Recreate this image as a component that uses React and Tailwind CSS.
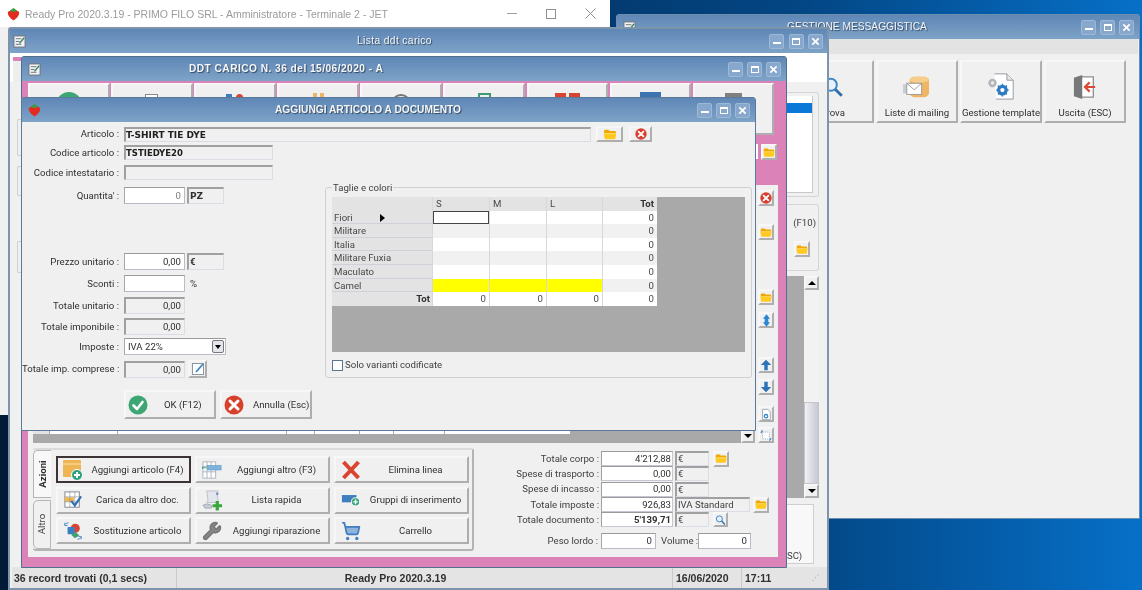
import { ShoppingCart, Wrench } from "lucide-react";

const bevel = "border-2 border-t-[#f7f7f7] border-l-[#f7f7f7] border-b-[#aeaeae] border-r-[#aeaeae] bg-[#f0f0f0]";
const inset = "border border-t-2 border-l-2 border-t-[#a0a0a0] border-l-[#a0a0a0] border-b-[#dcdce4] border-r-[#dcdce4] bg-[#f0f0f0]";
const input = "border border-[#b8bcc8] border-t-[#9a9a9a] border-l-[#a8a8a8] bg-white";

function Folder({ className = "w-[14px] h-[11px]" }) {
  return (
    <svg viewBox="0 0 16 13" className={className}>
      <path d="M1 2.5 Q1 1 2.5 1 H6 L7.5 2.5 H13.5 Q15 2.5 15 4 V6 H1 Z" fill="#f0a800" />
      <path d="M0.5 5 H15.5 L14.5 11 Q14.3 12 13.3 12 H2.7 Q1.7 12 1.5 11 Z" fill="#ffc91f" />
      <path d="M1 5.5 H15" stroke="#ffe27a" strokeWidth="1" />
    </svg>
  );
}

function RedX({ className = "w-[14px] h-[14px]" }) {
  return (
    <svg viewBox="0 0 20 20" className={className}>
      <circle cx="10" cy="10" r="9.5" fill="#d8402e" />
      <path d="M6 6 L14 14 M14 6 L6 14" stroke="#fff" strokeWidth="3" strokeLinecap="round" />
    </svg>
  );
}

function GreenCheck() {
  return (
    <svg viewBox="0 0 20 20" className="w-[20px] h-[20px]">
      <circle cx="10" cy="10" r="9.5" fill="#3da672" />
      <path d="M5.5 10.5 L9 14 L14.5 7" stroke="#fff" strokeWidth="2.6" fill="none" strokeLinecap="round" strokeLinejoin="round" />
    </svg>
  );
}

function AddBox() {
  return (
    <svg viewBox="0 0 22 22" className="w-[22px] h-[22px]">
      <rect x="1" y="1" width="18" height="17" rx="1" fill="#eeb554" />
      <path d="M1 5 H19" stroke="#f8d48c" strokeWidth="1.5" />
      <circle cx="15" cy="16" r="5.5" fill="#2f9f80" stroke="#fff" />
      <path d="M12 16 H18 M15 13 V19" stroke="#fff" strokeWidth="1.8" />
    </svg>
  );
}

function TableAdd() {
  return (
    <svg viewBox="0 0 22 22" className="w-[20px] h-[20px]">
      <path d="M1 2 H15 V20 H1 Z M1 7 H15 M1 13 H15 M5.5 2 V20 M10 2 V20" fill="#fff" stroke="#a9b2bb" />
      <rect x="6" y="6" width="15" height="5" fill="#7cb4de" stroke="#5c94c0" strokeWidth="0.6" />
      <path d="M0 8.5 H5 M1 7 L0 8.5 L1 10" stroke="#3f9a6a" fill="none" />
    </svg>
  );
}

function BigX() {
  return (
    <svg viewBox="0 0 20 20" className="w-[20px] h-[20px]">
      <path d="M2.5 2 L17.5 18 M17.5 2 L2.5 18" stroke="#d9432f" strokeWidth="4" />
    </svg>
  );
}

function CheckTable() {
  return (
    <svg viewBox="0 0 20 20" className="w-[18px] h-[18px]">
      <rect x="1" y="1" width="16" height="17" fill="#fff" stroke="#77808a" />
      <rect x="1" y="7" width="10" height="5" fill="#f2b64a" />
      <path d="M1 6.5 H17 M1 12 H17 M6.5 1 V18 M12 1 V18" stroke="#8b949e" strokeWidth="0.7" />
      <path d="M8 11 L12 16 L19 6" stroke="#2f6fb6" strokeWidth="2.4" fill="none" />
    </svg>
  );
}

function ListAdd() {
  return (
    <svg viewBox="0 0 22 22" className="w-[21px] h-[21px]">
      <path d="M5 1 H17 Q15 3 16 5 L17 13 H5 Q7 12 6 9 Z" fill="#e3e6ee" stroke="#a0a6b4" strokeWidth="0.6" />
      <path d="M1 16 Q5 13 10 16 V19 H3 Z" fill="#c8ccd8" stroke="#8b90a0" strokeWidth="0.6" />
      <circle cx="16" cy="4" r="1.4" fill="#7a8fb5" />
      <path d="M11 16.5 H21 M16 11.5 V21.5" stroke="#38a83a" strokeWidth="3.4" />
    </svg>
  );
}

function GroupAdd() {
  return (
    <svg viewBox="0 0 22 14" className="w-[20px] h-[13px]">
      <rect x="1" y="1" width="16" height="8" fill="#3d7fbe" />
      <circle cx="16" cy="8.5" r="4.5" fill="#3aa47c" stroke="#fff" />
      <path d="M13.5 8.5 H18.5 M16 6 V11" stroke="#fff" strokeWidth="1.4" />
    </svg>
  );
}

function SwapIcon() {
  return (
    <svg viewBox="0 0 22 22" className="w-[20px] h-[20px]">
      <circle cx="13.5" cy="8" r="5" fill="#d9432f" />
      <rect x="5" y="6.5" width="8" height="8" rx="1" fill="#3c7fc0" />
      <path d="M9 15 L14 12 L18 16 L13 19 Z" fill="#3fa072" />
      <path d="M2 4 Q3 2 6 2 M2 2 V5 H5 M20 18 Q19 20 16 20 M20 20 V17 H17" stroke="#3c7fc0" fill="none" />
    </svg>
  );
}

function MailDb() {
  return (
    <svg viewBox="0 0 30 28" className="w-[28px] h-[26px]">
      <rect x="7" y="3" width="21" height="22" rx="5" fill="#edb565" />
      <ellipse cx="17.5" cy="6" rx="10.5" ry="3.4" fill="#f6cd8a" />
      <rect x="0" y="11" width="5" height="10" fill="#c9ccd0" />
      <rect x="4" y="10" width="16" height="12" fill="#fff" stroke="#9a9a9a" />
      <path d="M4 10 L12 17 L20 10" stroke="#9a9a9a" fill="none" />
    </svg>
  );
}

function DocGear() {
  return (
    <svg viewBox="0 0 30 30" className="w-[27px] h-[27px]">
      <path d="M7 1 H21 L28 8 V29 H9" fill="#fff" stroke="#8e939a" />
      <path d="M21 1 V8 H28" fill="#e4e6ea" stroke="#8e939a" />
      <circle cx="5" cy="11" r="3.2" fill="none" stroke="#b3b6ba" strokeWidth="3" />
      <circle cx="16" cy="19" r="4.2" fill="none" stroke="#2f7ac0" strokeWidth="3.6" />
      <path d="M16 12 V26 M9 19 H23 M11 14 L21 24 M21 14 L11 24" stroke="#2f7ac0" strokeWidth="1.6" strokeDasharray="2 10" />
    </svg>
  );
}

function ExitDoor() {
  return (
    <svg viewBox="0 0 26 28" className="w-[24px] h-[26px]">
      <path d="M9 3 H22 V25 H9" fill="#fff" stroke="#8f8f8f" strokeWidth="1.4" />
      <path d="M1 4 L10 1 V27 L1 24 Z" fill="#77787a" />
      <path d="M24 14 H13 M18 9 L13 14 L18 19" stroke="#dc4a35" strokeWidth="2.4" fill="none" />
    </svg>
  );
}

function Lens({ className = "w-[20px] h-[20px]" }) {
  return (
    <svg viewBox="0 0 20 20" className={className}>
      <circle cx="8" cy="8" r="5.5" fill="#e8f2fa" stroke="#3d87c4" strokeWidth="1.8" />
      <path d="M12 12 L18 18" stroke="#2f6fa8" strokeWidth="2.6" />
    </svg>
  );
}

function ArrowIcon({ down }) {
  return (
    <svg viewBox="0 0 14 14" className="w-[14px] h-[14px]">
      <path d={down ? "M5 1 H9 V7 H13 L7 13 L1 7 H5 Z" : "M5 13 H9 V7 H13 L7 1 L1 7 H5 Z"} fill="#2c72b8" />
    </svg>
  );
}

function WinBtn({ kind }) {
  return (
    <div className="w-[15px] h-[15px] rounded-[2px] bg-[#87a8cc] border border-[#9cb9d8] flex items-center justify-center">
      {kind === "min" && <div className="w-[8px] h-[2px] mt-[4px] bg-white" />}
      {kind === "max" && <div className="w-[8px] h-[7px] border border-t-2 border-white" />}
      {kind === "close" && (
        <svg viewBox="0 0 10 10" className="w-[9px] h-[9px]">
          <path d="M1.5 1.5 L8.5 8.5 M8.5 1.5 L1.5 8.5" stroke="#fff" strokeWidth="2" />
        </svg>
      )}
    </div>
  );
}

function TitleBar({ title, titleClass, icon, padClass = "pl-[5px] pr-[5px]", gapClass = "gap-[4px]" }) {
  return (
    <div className={`relative h-[24px] shrink-0 bg-gradient-to-b from-[#5f87b6] to-[#7ea3c8] flex items-center ${padClass}`}>
      <div className="w-[15px] h-[15px] flex items-center justify-center">{icon}</div>
      <div
        className={`flex-1 min-w-0 whitespace-nowrap text-[10.2px] [font-family:'Liberation_Sans',sans-serif] font-bold text-[#f4f6f8] [text-shadow:1px_1px_1px_#33475e] ${titleClass}`}
      >
        {title}
      </div>
      <div className={`flex ${gapClass}`}>
        <WinBtn kind="min" />
        <WinBtn kind="max" />
        <WinBtn kind="close" />
      </div>
    </div>
  );
}

function NoteIcon() {
  return (
    <svg viewBox="0 0 14 14" className="w-[14px] h-[14px]">
      <rect x="1.5" y="1.5" width="11" height="11" fill="#fff" stroke="#8c98a6" />
      <path d="M6 1.5 H12.5" stroke="#8c98a6" />
      <path d="M5 10 L12 2" stroke="#3d87c4" strokeWidth="1.8" />
    </svg>
  );
}

function Strawberry({ className = "w-[13px] h-[14px]" }) {
  return (
    <svg viewBox="0 0 14 15" className={className}>
      <path d="M1 5 Q7 1.5 13 5 Q14 10 7 14.5 Q0 10 1 5 Z" fill="#e22c22" />
      <path d="M3 4 L7 1 L11 4 L7 5.5 Z" fill="#3c9b3c" />
    </svg>
  );
}

function SmallWinIcon() {
  return (
    <svg viewBox="0 0 14 14" className="w-[13px] h-[13px]">
      <rect x="1" y="1" width="12" height="12" fill="#eef1f5" stroke="#6b6f75" />
      <path d="M3 4 H9 M3 7 H7 M3 10 H9" stroke="#6b6f75" />
      <path d="M7 9 L12 3" stroke="#3e8a5c" strokeWidth="1.6" />
    </svg>
  );
}

function Label({ children, className = "" }) {
  return <div className={`w-[98px] text-right pr-[1px] text-[#303030] whitespace-nowrap ${className}`}>{children}</div>;
}

function FormRow({ label, className = "", children }) {
  return (
    <div className={`flex items-center gap-[4px] ${className}`}>
      <Label>{label}</Label>
      {children}
    </div>
  );
}

function Box({ className, children }) {
  return <div className={`flex items-center overflow-hidden whitespace-nowrap ${className}`}>{children}</div>;
}

const gridRows = [
  { name: "Fiori", arrow: true },
  { name: "Militare", alt: true },
  { name: "Italia" },
  { name: "Militare Fuxia", alt: true },
  { name: "Maculato" },
  { name: "Camel", alt: true, yellow: true },
];

function TaglieGrid() {
  return (
    <div className="mx-[6px] mt-[9px] h-[155px] bg-[#a9a9a9]">
      <div className="grid grid-cols-[100px_56px_56px_55px_54px] w-[325px] auto-rows-[13.6px] gap-x-[1px] leading-[13px] text-[#484848] bg-[#d6d8e0]">
        <div className="bg-[#e3e3e3]" />
        <div className="bg-[#e3e3e3] pl-[3px]">S</div>
        <div className="bg-[#e3e3e3] pl-[3px]">M</div>
        <div className="bg-[#e3e3e3] pl-[3px]">L</div>
        <div className="bg-[#e3e3e3] text-right pr-[3px] font-bold text-[#303030]">Tot</div>
        {gridRows.map((r) => (
          <div key={r.name} className="contents">
            <div className="relative bg-[#e3e3e3] pl-[2px] border-b border-[#cfd0d8]">
              {r.name}
              {r.arrow && <div className="absolute left-[48px] top-[3px] border-l-[5px] border-l-black border-y-[4px] border-y-transparent" />}
            </div>
            {[0, 1, 2].map((i) => (
              <div
                key={i}
                className={
                  r.yellow
                    ? "bg-[#ffff00]"
                    : r.arrow && i === 0
                      ? "bg-white border border-[#444]"
                      : r.alt
                        ? "bg-[#f1f1f1]"
                        : "bg-white"
                }
              />
            ))}
            <div className={`text-right pr-[3px] ${r.alt ? "bg-[#f1f1f1]" : "bg-white"}`}>0</div>
          </div>
        ))}
        <div className="bg-[#e3e3e3] text-right pr-[2px] font-bold text-[#303030]">Tot</div>
        <div className="bg-white text-right pr-[3px]">0</div>
        <div className="bg-white text-right pr-[3px]">0</div>
        <div className="bg-white text-right pr-[3px]">0</div>
        <div className="bg-white text-right pr-[3px]">0</div>
      </div>
    </div>
  );
}

function Dialog() {
  return (
    <div className="absolute left-[21px] top-[97px] w-[735px] h-[334px] flex flex-col border border-[#5b7a99] bg-[#f0f0f0] rounded-t-[3px]">
      <TitleBar title="AGGIUNGI ARTICOLO A DOCUMENTO" titleClass="pl-[233px]" icon={<Strawberry />} />
      <div className="pt-[4px] flex flex-col">
        <FormRow label="Articolo :">
          <Box className={`w-[467px] h-[15px] ${inset}`}>
            <span className="[font-family:'DejaVu_Sans',sans-serif] font-bold text-[9px] text-[#202020]">T-SHIRT TIE DYE</span>
          </Box>
          <div className="flex ml-[1px] gap-[6px]">
            <div className={`w-[27px] h-[16px] flex items-center justify-center ${bevel}`}><Folder /></div>
            <div className={`w-[23px] h-[16px] flex items-center justify-center ${bevel}`}><RedX className="w-[12px] h-[12px]" /></div>
          </div>
        </FormRow>
        <FormRow label="Codice articolo :" className="mt-[3px]">
          <Box className={`w-[149px] h-[15px] ${inset}`}>
            <span className="[font-family:'DejaVu_Sans',sans-serif] font-bold text-[8.5px] text-[#202020]">TSTIEDYE20</span>
          </Box>
        </FormRow>
        <FormRow label="Codice intestatario :" className="mt-[5px]">
          <Box className={`w-[149px] h-[15px] ${inset}`} />
        </FormRow>
      </div>
      <div className="flex mt-[5px]">
        <div className="w-[302px] flex flex-col">
          <FormRow label="Quantita' :" className="mt-[2px]">
            <Box className={`w-[61px] h-[17px] justify-end pr-[3px] text-[#808080] ${input}`}>0</Box>
            <Box className={`w-[37px] h-[17px] ml-[-2px] pl-[1px] ${inset}`}>
              <span className="[font-family:'DejaVu_Sans',sans-serif] font-bold text-[9px]">PZ</span>
            </Box>
          </FormRow>
          <FormRow label="Prezzo unitario :" className="mt-[49px]">
            <Box className={`w-[61px] h-[17px] justify-end pr-[3px] ${input}`}>0,00</Box>
            <Box className={`w-[37px] h-[17px] ml-[-2px] pl-[1px] ${inset}`}>
              <span className="font-bold">€</span>
            </Box>
          </FormRow>
          <FormRow label="Sconti :" className="mt-[5px]">
            <Box className={`w-[61px] h-[17px] ${input}`} />
            <span className="ml-[1px]">%</span>
          </FormRow>
          <FormRow label="Totale unitario :" className="mt-[5px]">
            <Box className={`w-[61px] h-[17px] justify-end pr-[3px] ${inset}`}>0,00</Box>
          </FormRow>
          <FormRow label="Totale imponibile :" className="mt-[4px]">
            <Box className={`w-[61px] h-[17px] justify-end pr-[3px] ${inset}`}>0,00</Box>
          </FormRow>
          <FormRow label="Imposte :" className="mt-[3px]">
            <Box className={`w-[102px] h-[17px] justify-between pl-[3px] ${input}`}>
              IVA 22%
              <div className="w-[12px] h-[13px] mr-[1px] rounded-[2px] bg-[#e4e6ec] border border-[#777] flex items-center justify-center">
                <div className="border-t-[4px] border-t-black border-x-[3px] border-x-transparent" />
              </div>
            </Box>
          </FormRow>
          <FormRow label="Totale imp. comprese :" className="mt-[5px]">
            <Box className={`w-[61px] h-[17px] justify-end pr-[3px] ${inset}`}>0,00</Box>
            <div className={`w-[19px] h-[18px] ml-[-1px] flex items-center justify-center ${bevel}`}><NoteIcon /></div>
          </FormRow>
          <div className="flex ml-[102px] mt-[12px] gap-[4px]">
            <div className={`w-[92px] h-[29px] flex items-center pl-[2px] ${bevel}`}>
              <GreenCheck />
              <span className="ml-[16px] whitespace-nowrap">OK (F12)</span>
            </div>
            <div className={`w-[92px] h-[29px] flex items-center pl-[2px] ${bevel}`}>
              <RedX className="w-[20px] h-[20px]" />
              <span className="ml-[9px] whitespace-nowrap">Annulla (Esc)</span>
            </div>
          </div>
        </div>
        <fieldset className="w-[427px] h-[196px] -mt-[3px] ml-[1px] border border-[#d0d0d0] rounded-[3px]">
          <legend className="ml-[6px] px-[1px] leading-[11px] text-[#404040]">Taglie e colori</legend>
          <div className="-mt-[5px]">
            <TaglieGrid />
            <div className="flex items-center gap-[2px] ml-[6px] mt-[7px] text-[#404040]">
              <div className="w-[11px] h-[11px] border border-[#5b7490] bg-white" />
              Solo varianti codificate
            </div>
          </div>
        </fieldset>
      </div>
    </div>
  );
}

function ActionBtn({ label, icon, className = "" }) {
  return (
    <div className={`h-[27px] flex items-center ${bevel} ${className}`}>
      <div className="w-[30px] flex justify-center shrink-0">{icon}</div>
      <div className="flex-1 text-center pr-[2px] whitespace-nowrap text-[#303030]">{label}</div>
    </div>
  );
}

function AzioniPanel() {
  return (
    <div className="w-[441px] h-[103px] shrink-0 flex border-2 border-l-0 border-[#b4b4b4] border-t-[#dadada] rounded-[3px]">
      <div className="w-[18px] shrink-0 flex flex-col">
        <div className="h-[49px] bg-[#f8f8f8] border border-r-0 border-[#b5b5b5] rounded-tl-[5px] flex items-center justify-center">
          <span className="-rotate-90 font-bold whitespace-nowrap">Azioni</span>
        </div>
        <div className="h-[51px] mt-[2px] bg-[#f0f0f0] border border-[#b5b5b5] rounded-l-[5px] flex items-center justify-center">
          <span className="-rotate-90 whitespace-nowrap text-[#404040]">Altro</span>
        </div>
      </div>
      <div className="flex-1 grid grid-cols-3 gap-x-[4px] gap-y-[3.5px] pl-[5px] pr-[3px] pt-[6px] content-start">
        <ActionBtn label="Aggiungi articolo (F4)" icon={<AddBox />} className="!border-[#3c3434] !border-t-[#3c3434]" />
        <ActionBtn label="Aggiungi altro (F3)" icon={<TableAdd />} />
        <ActionBtn label="Elimina linea" icon={<BigX />} />
        <ActionBtn label="Carica da altro doc." icon={<CheckTable />} />
        <ActionBtn label="Lista rapida" icon={<ListAdd />} />
        <ActionBtn label="Gruppi di inserimento" icon={<GroupAdd />} />
        <ActionBtn label="Sostituzione articolo" icon={<SwapIcon />} />
        <ActionBtn label="Aggiungi riparazione" icon={<Wrench className="w-[20px] h-[20px] text-[#777] fill-[#888]" />} />
        <ActionBtn label="Carrello" icon={<ShoppingCart className="w-[20px] h-[20px] text-[#3f7cc0] fill-[#8db4dc]" />} />
      </div>
    </div>
  );
}

function TotalRow({ label, value, unit, bold, unitClass = "w-[34px]", after }) {
  return (
    <div className="flex items-center h-[15.3px]">
      <div className="w-[85px] text-right pr-[2px] whitespace-nowrap text-[#404040]">{label} :</div>
      <Box className={`w-[72px] h-[15px] justify-end pr-[1px] border border-[#c4c8d4] border-t-[#9a9a9a] border-l-[#a0a0a0] bg-white ${bold ? "font-bold" : ""}`}>{value}</Box>
      <Box className={`h-[15px] ml-[2px] pl-[1px] text-[#404040] ${inset} ${unitClass}`}>{unit}</Box>
      {after}
    </div>
  );
}

function Totals() {
  return (
    <div className="ml-[42px] pt-[3px] flex flex-col">
      <TotalRow label="Totale corpo" value="4'212,88" unit="€" after={<div className={`w-[16px] h-[16px] ml-[4px] flex items-center justify-center ${bevel}`}><Folder /></div>} />
      <TotalRow label="Spese di trasporto" value="0,00" unit="€" />
      <TotalRow label="Spese di incasso" value="0,00" unit="€" />
      <TotalRow label="Totale imposte" value="926,83" unit="IVA Standard" unitClass="w-[75px]" after={<div className={`w-[16px] h-[16px] ml-[3px] flex items-center justify-center ${bevel}`}><Folder /></div>} />
      <TotalRow label="Totale documento" value="5'139,71" unit="€" bold after={<div className={`w-[15px] h-[15px] ml-[4px] flex items-center justify-center ${bevel}`}><Lens className="w-[12px] h-[12px]" /></div>} />
      <div className="flex items-center mt-[6px]">
        <div className="w-[85px] text-right pr-[3px] text-[#404040]">Peso lordo :</div>
        <Box className={`w-[55px] h-[16px] justify-end pr-[3px] ${input}`}>0</Box>
        <div className="ml-[5px] w-[37px] text-[#404040] whitespace-nowrap">Volume :</div>
        <Box className={`w-[53px] h-[16px] justify-end pr-[3px] ${input}`}>0</Box>
      </div>
    </div>
  );
}

function SideBtn({ children, className = "" }) {
  return <div className={`w-[16px] h-[16px] flex items-center justify-center ${bevel} ${className}`}>{children}</div>;
}

const topButtons = [
  <div key="1" className="w-[26px] h-[26px] rounded-full bg-[#3da672] mx-auto mt-[7px]" />,
  <div key="2" className="w-[13px] h-[13px] border border-[#888] bg-white mx-auto mt-[9px]" />,
  <div key="3" className="flex justify-center gap-[4px] mt-[9px]"><div className="w-[6px] h-[8px] bg-[#3c7fc0]" /><div className="w-[7px] h-[7px] rounded-full bg-[#d9432f]" /></div>,
  <div key="4" className="flex justify-center gap-[3px] mt-[8px]"><div className="w-[4px] h-[8px] bg-[#edb565]" /><div className="w-[4px] h-[5px] bg-[#edb565]" /></div>,
  <div key="5" className="w-[20px] h-[20px] rounded-full border-2 border-[#777] mx-auto mt-[9px]" />,
  <div key="6" className="w-[13px] h-[13px] border-2 border-[#3f9a6f] mx-auto mt-[8px]" />,
  <div key="7" className="flex justify-center gap-[3px] mt-[8px]"><div className="w-[11px] h-[8px] bg-[#d9432f]" /><div className="w-[11px] h-[8px] bg-[#d9432f]" /></div>,
  <div key="8" className="w-[21px] h-[20px] bg-[#3c74b0] mx-auto mt-[7px]" />,
  <div key="9" className="w-[17px] h-[12px] bg-[#808080] mx-auto mt-[8px]" />,
];

function DdtWindow() {
  return (
    <div className="absolute left-[21px] top-[56px] w-[766px] h-[512px] flex flex-col border border-[#4f6f8f] rounded-t-[3px] bg-[#db83b8]">
      <TitleBar title="DDT CARICO N. 36 del 15/06/2020 - A" titleClass="pl-[147px] text-[#e4e9ef] tracking-[0.45px]" icon={<SmallWinIcon />} />
      <div className="flex-1 min-h-0 flex flex-col pl-[6px] pr-[8px] pt-[2px]">
        <div className="flex gap-[1.6px] h-[52px] shrink-0">
          {topButtons.map((b, i) => (
            <div key={i} className={`w-[81.5px] overflow-hidden ${bevel}`}>{b}</div>
          ))}
        </div>
        <div className="h-[50px] shrink-0 flex justify-end items-start pt-[9px] pr-[1px] gap-[3px]">
          <div className="w-[3px] h-[15px] bg-white" />
          <SideBtn><Folder /></SideBtn>
        </div>
        <div className="h-[372px] shrink-0 bg-[#f0f0f0] flex flex-col pl-[5px]">
          <div className="flex h-[258px] shrink-0">
            <div className="relative w-[722px] bg-[#a9a9a9] flex flex-col justify-end pb-[9px]">
              <div className="flex h-[4px] w-[537px] gap-[1px]">
                <div className="w-[16px] bg-[#e3e3e3]" />
                <div className="w-[67px] bg-white" />
                <div className="w-[168px] bg-white" />
                <div className="w-[27px] bg-white" />
                <div className="w-[44px] bg-white" />
                <div className="w-[33px] bg-white" />
                <div className="w-[50px] bg-white" />
                <div className="flex-1 bg-white" />
              </div>
              <div className={`absolute right-0 bottom-0 w-[14px] h-[14px] flex items-center justify-center ${bevel}`}>
                <div className="border-t-[4px] border-t-black border-x-[4px] border-x-transparent" />
              </div>
            </div>
            <div className="flex flex-col items-center w-[16px] ml-[3px]">
              <SideBtn className="mt-[5px]"><RedX className="w-[12px] h-[12px]" /></SideBtn>
              <SideBtn className="mt-[18px]"><Folder /></SideBtn>
              <SideBtn className="mt-[49px]"><Folder /></SideBtn>
              <SideBtn className="mt-[7px]">
                <svg viewBox="0 0 10 14" className="w-[9px] h-[13px]"><path d="M5 0 L9 5 H7 V9 H9 L5 14 L1 9 H3 V5 H1 Z" fill="#2f86d0" /></svg>
              </SideBtn>
              <SideBtn className="mt-[29px]"><ArrowIcon /></SideBtn>
              <SideBtn className="mt-[6px]"><ArrowIcon down /></SideBtn>
              <SideBtn className="mt-[11px]">
                <svg viewBox="0 0 14 14" className="w-[13px] h-[13px]"><path d="M3 1 H9 L12 4 V13 H3 Z" fill="#fff" stroke="#9aa0a8" /><circle cx="7" cy="9" r="2" fill="none" stroke="#3f87c6" strokeWidth="1.5" /></svg>
              </SideBtn>
              <SideBtn className="mt-[5px]">
                <svg viewBox="0 0 14 14" className="w-[13px] h-[13px]"><rect x="3" y="3" width="8" height="8" fill="#fff" stroke="#a5b4c4" strokeDasharray="1.5 1" /><path d="M1 4 L3 1 M13 10 L11 13" stroke="#3f87c6" strokeWidth="1.4" /></svg>
              </SideBtn>
            </div>
          </div>
          <div className="flex mt-[5px]">
            <AzioniPanel />
            <Totals />
          </div>
        </div>
      </div>
    </div>
  );
}

function ListaWindow() {
  return (
    <div className="absolute left-[8px] top-[27px] w-[821px] h-[563px] flex flex-col border-2 border-[#7e94aa] rounded-t-[3px] bg-[#f0f0f0]">
      <TitleBar title="Lista ddt carico" titleClass="pl-[330px] font-normal text-[#e8edf2] tracking-[0.4px]" icon={<SmallWinIcon />} padClass="pl-[2px] pr-[4px]" gapClass="gap-[4.5px]" />
      <div className="h-[29px] shrink-0 bg-white pl-[3px] pt-[4px]">
        <div className="w-[25px] h-[25px] border-t-4 border-[#db83b8] bg-[#eee]" />
      </div>
      <div className="flex-1 min-h-0 flex">
        <div className="w-[11px] flex flex-col items-end">
          <div className="w-[4px] h-[37px] mt-[37px] border border-r-0 border-[#d0d0d0] rounded-l-[2px]" />
          <div className="w-[4px] h-[30px] mt-[10px] border border-r-0 border-[#d0d0d0] rounded-l-[2px]" />
          <div className="w-[4px] h-[32px] mt-[45px] border border-r-0 border-[#d0d0d0] rounded-l-[2px]" />
        </div>
        <div className="flex-1 flex flex-col items-end pr-[8px]">
          <div className="w-[33px] h-[105px] mt-[10px] border border-l-0 border-[#d4d4d4] rounded-r-[3px] pr-[5px] pt-[3px]">
            <div className="h-[97px] bg-white border-r border-b border-[#c8c8c8] pt-[7px]">
              <div className="h-[10px] bg-[#0a78d8]" />
            </div>
          </div>
          <div className="w-[33px] h-[67px] mt-[7px] border border-l-0 border-[#d4d4d4] rounded-r-[3px] flex flex-col items-end pr-[2px]">
            <div className="mt-[12px] whitespace-nowrap text-[#404040]">(F10)</div>
            <div className={`mt-[12px] mr-[6px] w-[16px] h-[16px] flex items-center justify-center ${bevel}`}><Folder /></div>
          </div>
          <div className="flex w-[32px] h-[222px] mt-[5px]">
            <div className="w-[17px] bg-[#a9a9a9]" />
            <div className="w-[15px] flex flex-col bg-[#f2f2f2]">
              <div className={`h-[14px] flex items-center justify-center ${bevel}`}>
                <div className="border-b-[4px] border-b-black border-x-[4px] border-x-transparent" />
              </div>
              <div className="mt-[112px] h-[82px] bg-gradient-to-r from-[#f0f0f4] to-[#c8c8d4] border border-[#c4c4cc]" />
              <div className={`mt-auto h-[14px] flex items-center justify-center ${bevel}`}>
                <div className="border-t-[4px] border-t-black border-x-[4px] border-x-transparent" />
              </div>
            </div>
          </div>
          <div className="w-[27px] h-[60px] mt-[6px] mr-[5px] bg-[#f8f8f8] border border-l-0 border-[#cfcfcf] flex items-end pb-[1px] text-[#404040]">
            <span className="whitespace-nowrap">SC)</span>
          </div>
        </div>
      </div>
      <div className="h-[21px] shrink-0 ml-[2px] bg-[#e4e4e4] flex items-center font-bold text-[#303030] text-[10.5px] [font-family:'Liberation_Sans',sans-serif]">
        <div className="w-[165px] pl-[2px] whitespace-nowrap border-r border-[#cacaca] h-full flex items-center">36 record trovati (0,1 secs)</div>
        <div className="w-[495px] text-center whitespace-nowrap pr-[58px]">Ready Pro 2020.3.19</div>
        <div className="w-[69px] pl-[3px] whitespace-nowrap border-l border-[#cacaca] h-full flex items-center">16/06/2020</div>
        <div className="w-[60px] pl-[3px] whitespace-nowrap border-l border-[#cacaca] h-full flex items-center">17:11</div>
        <div className="flex-1 flex justify-end pr-[8px] text-[#bcbcbc] text-[7px]">⋰</div>
      </div>
    </div>
  );
}

function MainWindow() {
  return (
    <div className="absolute left-0 top-0 w-[610px] h-[415px] bg-[#f0f0f0] flex flex-col">
      <div className="h-[27px] bg-white flex items-center pl-[7px] text-[10.5px] [font-family:'Liberation_Sans',sans-serif] text-[#9b9b9b]">
        <Strawberry className="w-[13px] h-[14px]" />
        <span className="ml-[5px] whitespace-nowrap">Ready Pro 2020.3.19 - PRIMO FILO SRL - Amministratore - Terminale 2 - JET</span>
        <div className="ml-auto flex items-center">
          <div className="w-[10px] h-[1px] bg-[#a0a0a0] mr-[29px]" />
          <div className="w-[10px] h-[10px] border border-[#909090] mr-[29px]" />
          <svg viewBox="0 0 11 11" className="w-[11px] h-[11px] mr-[14px]"><path d="M0.5 0.5 L10.5 10.5 M10.5 0.5 L0.5 10.5" stroke="#909090" /></svg>
        </div>
      </div>
    </div>
  );
}

function ToolBtn({ label, icon, className = "" }) {
  return (
    <div className={`w-[82px] h-[63px] shrink-0 flex flex-col items-center ${bevel} ${className}`}>
      <div className="h-[44px] flex items-center justify-center pt-[5px]">{icon}</div>
      <div className="whitespace-nowrap text-[#303030] mt-[1px]">{label}</div>
    </div>
  );
}

function MessaggisticaWindow() {
  return (
    <div className="absolute left-[616px] top-[14px] w-[524px] h-[505px] flex flex-col border border-[#6e8eae] rounded-t-[3px] bg-[#f0f0f0]">
      <TitleBar title="GESTIONE MESSAGGISTICA" titleClass="pl-[150px] font-normal text-[#e8edf2]" icon={<SmallWinIcon />} />
      <div className="h-[15px] shrink-0 mx-[1px] bg-[#e3e3e3]" />
      <div className="flex justify-end gap-[2px] pr-[13px] mt-[6px]">
        <ToolBtn label="Trova" icon={<Lens className="w-[22px] h-[22px]" />} />
        <ToolBtn label="Liste di mailing" icon={<MailDb />} />
        <ToolBtn label="Gestione template" icon={<DocGear />} />
        <ToolBtn label="Uscita (ESC)" icon={<ExitDoor />} />
      </div>
    </div>
  );
}

export default function App() {
  return (
    <div className="relative w-[1142px] h-[590px] overflow-hidden bg-gradient-to-r from-[#021a38] via-[#034684] via-[70%] to-[#0670c8] text-[9.6px] leading-[12px] [font-family:'Roboto',Arial,sans-serif] text-[#303030] blur-[0.35px]">
      <MainWindow />
      <MessaggisticaWindow />
      <ListaWindow />
      <DdtWindow />
      <Dialog />
    </div>
  );
}
